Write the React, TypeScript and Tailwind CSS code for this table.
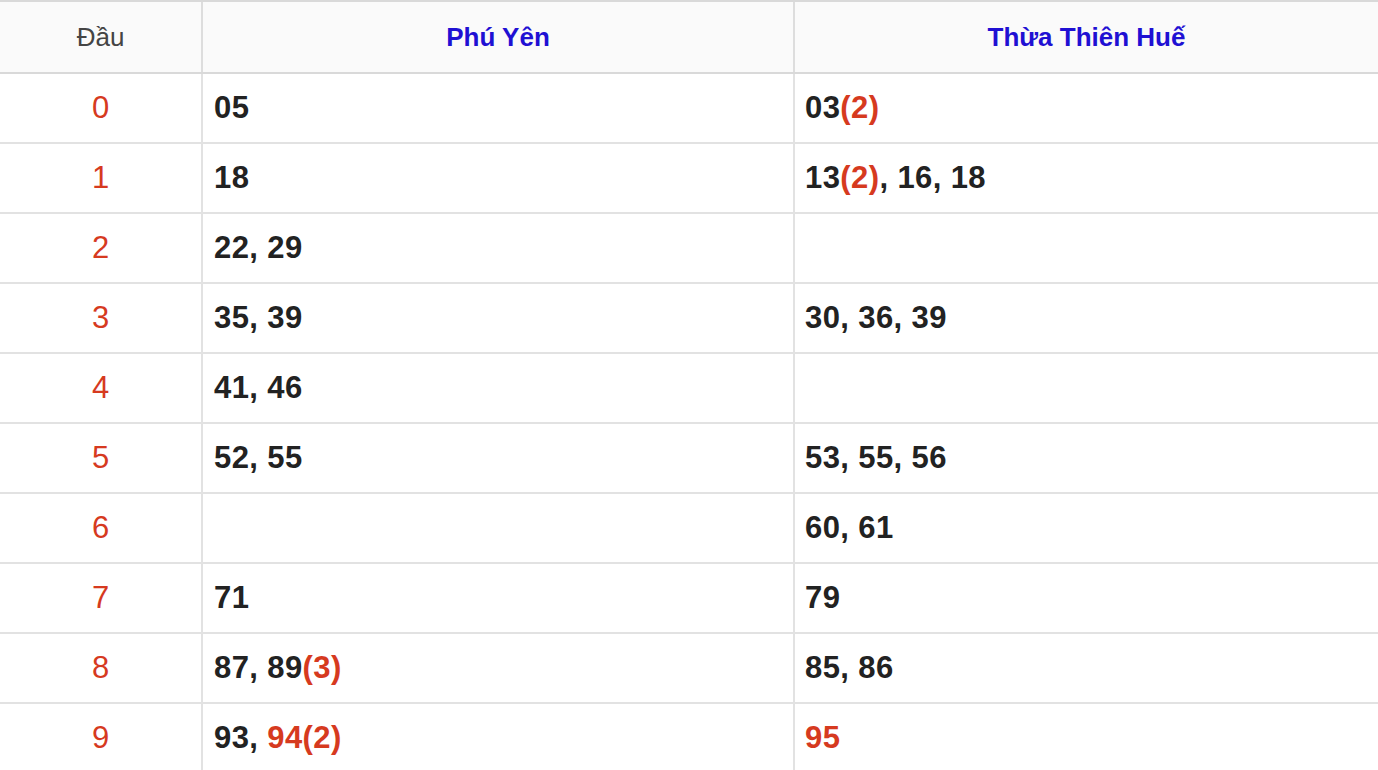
type Part = { t: string; red?: boolean };

const rows: { head: string; phuYen: Part[]; hue: Part[] }[] = [
  { head: '0', phuYen: [{ t: '05' }], hue: [{ t: '03' }, { t: '(2)', red: true }] },
  { head: '1', phuYen: [{ t: '18' }], hue: [{ t: '13' }, { t: '(2)', red: true }, { t: ', 16, 18' }] },
  { head: '2', phuYen: [{ t: '22, 29' }], hue: [] },
  { head: '3', phuYen: [{ t: '35, 39' }], hue: [{ t: '30, 36, 39' }] },
  { head: '4', phuYen: [{ t: '41, 46' }], hue: [] },
  { head: '5', phuYen: [{ t: '52, 55' }], hue: [{ t: '53, 55, 56' }] },
  { head: '6', phuYen: [], hue: [{ t: '60, 61' }] },
  { head: '7', phuYen: [{ t: '71' }], hue: [{ t: '79' }] },
  { head: '8', phuYen: [{ t: '87, 89' }, { t: '(3)', red: true }], hue: [{ t: '85, 86' }] },
  { head: '9', phuYen: [{ t: '93, ' }, { t: '94(2)', red: true }], hue: [{ t: '95', red: true }] },
];

function Nums({ parts }: { parts: Part[] }) {
  return (
    <span className="whitespace-pre tracking-[0.4px]">
      {parts.map((p, i) => (
        <span key={i} className={p.red ? 'text-[#d63a1f]' : 'text-[#222222]'}>
          {p.t}
        </span>
      ))}
    </span>
  );
}

export default function App() {
  return (
    <div
      className="w-[1378px] bg-white border-t-2 border-[#d9d9d9]"
      style={{ fontFamily: '"Liberation Sans", Arial, sans-serif' }}
    >
      <div className="flex h-[72px] bg-[#fafafa] border-b-2 border-[#d9d9d9] text-[26px]">
        <div className="w-[201px] flex items-center justify-center text-[#444444]">Đầu</div>
        <div className="w-[592px] border-l-2 border-[#dddddd] flex items-center justify-center font-bold text-[#1f10d3]">
          Phú Yên
        </div>
        <div className="flex-1 border-l-2 border-[#dddddd] flex items-center justify-center font-bold text-[#1f10d3]">
          Thừa Thiên Huế
        </div>
      </div>
      {rows.map((r) => (
        <div key={r.head} className="flex h-[70px] border-b-2 border-[#e2e2e2] text-[31px]">
          <div className="w-[201px] flex items-center justify-center pt-px text-[#d63a1f]">{r.head}</div>
          <div className="w-[592px] border-l-2 border-[#e2e2e2] flex items-center pl-[11px] pt-px font-bold">
            <Nums parts={r.phuYen} />
          </div>
          <div className="flex-1 border-l-2 border-[#e2e2e2] flex items-center pl-[10px] pt-px font-bold">
            <Nums parts={r.hue} />
          </div>
        </div>
      ))}
    </div>
  );
}
